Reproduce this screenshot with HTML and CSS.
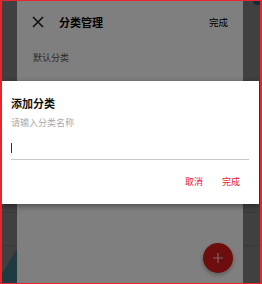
FILE: index.html
```html
<!DOCTYPE html>
<html lang="zh">
<head>
<meta charset="utf-8">
<link rel="stylesheet" href="styles.css">
</head>
<body>
<div class="screen">
  <div class="app">
    <div class="side side-left">
      <div class="row-line line-a"></div>
      <div class="row-line line-b"></div>
      <div class="corner-art"></div>
    </div>
    <div class="panel">
      <div class="header">
        <svg class="close-icon" width="12" height="12" viewBox="0 0 12 12"><path d="M1 1L11 11M11 1L1 11" stroke="#222" stroke-width="1.6" fill="none"/></svg>
        <span class="header-title">分类管理</span>
        <span class="header-done">完成</span>
      </div>
      <div class="list-item">默认分类</div>
      <div class="fab">
        <svg width="12" height="12" viewBox="0 0 12 12"><path d="M6 1V11M1 6H11" stroke="#f4c6cc" stroke-width="1.2"/></svg>
      </div>
    </div>
    <div class="side side-right">
      <div class="blob"></div>
      <div class="row-line line-a"></div>
      <div class="row-line line-b"></div>
    </div>
  </div>
  <div class="scrim"></div>
  <div class="dialog">
    <div class="dialog-title">添加分类</div>
    <div class="dialog-hint">请输入分类名称</div>
    <div class="dialog-input"><span class="caret"></span></div>
    <div class="dialog-actions">
      <span class="btn">取消</span>
      <span class="btn">完成</span>
    </div>
  </div>
</div>
</body>
</html>
```
FILE: styles.css
```css
* { box-sizing: border-box; }
html, body { margin: 0; padding: 0; }
body {
  font-family: "Noto Sans CJK SC", "Noto Sans", sans-serif;
  background: #fff;
}
.screen {
  position: relative;
  width: 262px;
  height: 284px;
  border: 2px solid #e8242c;
  border-top-width: 1px;
  border-bottom-width: 1px;
  overflow: hidden;
}
.app {
  display: flex;
  height: 100%;
}
.side {
  position: relative;
  background: #808080;
  display: flex;
  flex-direction: column;
}
.side-left { width: 15px; }
.side-right { width: 17px; }
.row-line {
  position: absolute;
  left: 0;
  right: 0;
  height: 1px;
  background: #707070;
}
.line-a { top: 211px; }
.line-b { top: 244px; }
.corner-art {
  margin-top: auto;
  height: 34px;
  background: #3e7480;
  clip-path: polygon(100% 0, 100% 100%, 0 100%, 0 72%);
}
.blob {
  margin-left: 10px;
  width: 10px;
  height: 4px;
  background: #2e5a7a;
  border-bottom-left-radius: 6px;
}
.panel {
  position: relative;
  width: 226px;
  background: #fff;
}
.header {
  display: flex;
  align-items: center;
  height: 42px;
  padding: 0 15px;
}
.header-title {
  margin-left: 15px;
  font-size: 11px;
  font-weight: bold;
  color: #000;
  flex: 1;
}
.header-done {
  font-size: 9.5px;
  color: #000;
}
.list-item {
  padding: 8px 16px;
  font-size: 9px;
  color: #555;
}
.fab {
  position: absolute;
  right: 10px;
  bottom: 10px;
  width: 30px;
  height: 30px;
  border-radius: 50%;
  background: #dc1a1a;
  display: flex;
  align-items: center;
  justify-content: center;
  box-shadow: 0 2px 4px rgba(0,0,0,0.3);
}
.scrim {
  position: absolute;
  inset: 0;
  background: rgba(0,0,0,0.5);
}
.dialog {
  position: absolute;
  left: -1px;
  right: 1px;
  top: 80px;
  height: 123px;
  background: #fff;
  padding: 14px 10px 0 10px;
  box-shadow: 0 2px 6px rgba(0,0,0,0.4);
}
.dialog-title {
  font-size: 11px;
  line-height: 16px;
  font-weight: bold;
  color: #111;
}
.dialog-hint {
  margin-top: 6px;
  font-size: 9px;
  line-height: 12px;
  color: #aaa;
}
.dialog-input {
  height: 27px;
  margin-top: 4px;
  border-bottom: 1px solid #c8c8c8;
  display: flex;
  align-items: flex-end;
  padding-bottom: 6px;
}
.caret {
  width: 1px;
  height: 10px;
  background: #333;
}
.dialog-actions {
  display: flex;
  justify-content: flex-end;
  margin-top: 10px;
  margin-right: 9px;
  gap: 19px;
}
.btn {
  font-size: 9px;
  line-height: 24px;
  color: #e8202c;
}
```
